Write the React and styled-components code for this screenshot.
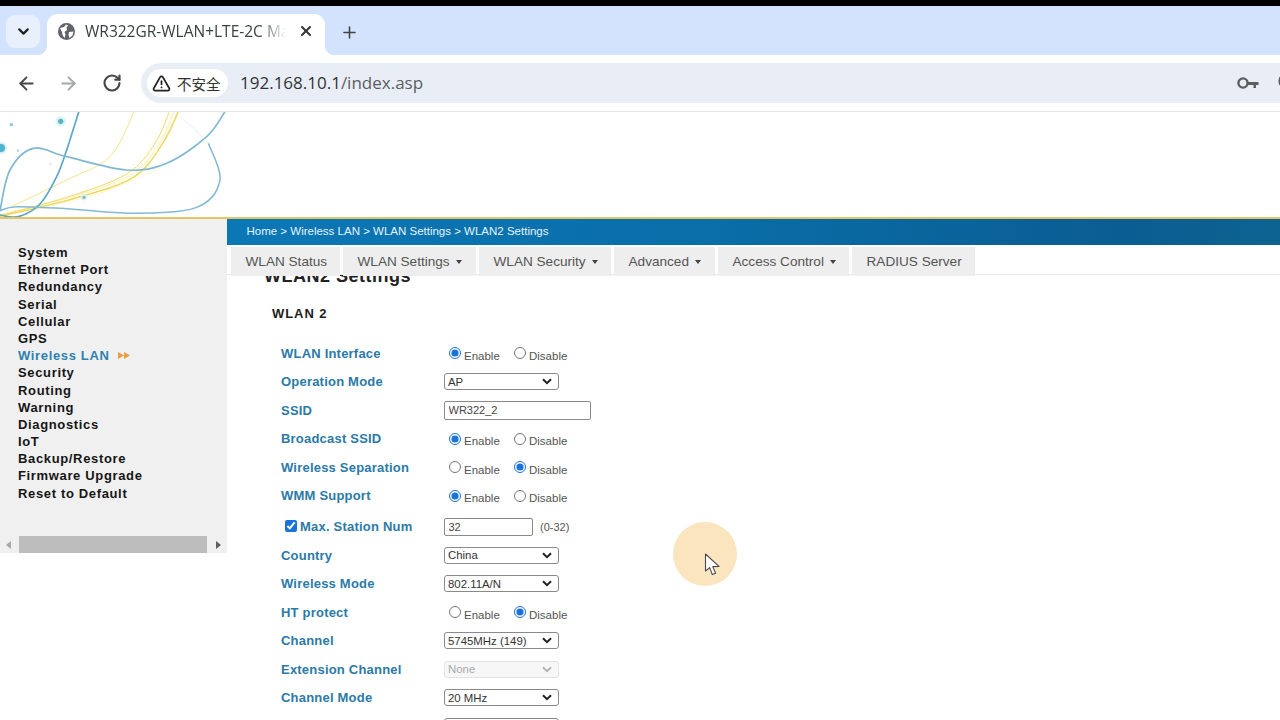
import React from "react";
import styled, { createGlobalStyle } from "styled-components";
import { ArrowLeft, ArrowRight, RotateCw, ChevronDown, X, Plus, TriangleAlert } from "lucide-react";

const Global = createGlobalStyle`
  html, body { margin: 0; padding: 0; background: #fff; }
  #root { width: 1280px; height: 720px; overflow: hidden; }
`;

const Page = styled.div`
  position: relative;
  width: 1280px;
  height: 720px;
  overflow: hidden;
  display: flex;
  flex-direction: column;
  font-family: "Liberation Sans", Arial, sans-serif;
  background: #fff;
`;
const BlackBar = styled.div`height: 6px; background: #000; flex: none;`;
const TabStrip = styled.div`
  height: 49px; flex: none; background: #d3e3fd;
  display: flex; align-items: flex-end; padding-left: 6px;
`;
const TabGroup = styled.div`
  width: 34px; height: 33px; margin-bottom: 7px; border-radius: 9px; background: #e8f0fd;
  display: flex; align-items: center; justify-content: center; color: #1f1f1f;
`;
const BrowserTab = styled.div`
  position: relative; width: 278px; height: 41px; margin-left: 7px;
  background: #fff; border-radius: 11px 11px 0 0;
  display: flex; align-items: center; padding: 0 11px 7px; box-sizing: border-box; gap: 10px;
  &::before, &::after {
    content: ""; position: absolute; bottom: 0; width: 10px; height: 10px;
  }
  &::before { left: -10px; background: radial-gradient(circle at 0 0, #d3e3fd 10px, #fff 10.5px); }
  &::after { right: -10px; background: radial-gradient(circle at 100% 0, #d3e3fd 10px, #fff 10.5px); }
`;
const TabTitle = styled.div`
  width: 203px; overflow: hidden; white-space: nowrap; color: #3c4043;
  font: 15.5px "Open Sans", sans-serif;
  -webkit-mask-image: linear-gradient(90deg, #000 86%, transparent 99%);
  mask-image: linear-gradient(90deg, #000 86%, transparent 99%);
`;
const NewTab = styled.div`
  margin: 0 0 8px 9px; height: 30px; width: 30px; display: flex; align-items: center; justify-content: center; color: #444;
`;
const Toolbar = styled.div`
  height: 57px; flex: none; background: #fff; display: flex; align-items: center;
  padding-left: 15px; box-sizing: border-box; border-bottom: 1px solid #e6e6e6;
`;
const NavButton = styled.div`
  width: 22px; height: 22px; margin-right: 20px; display: flex; align-items: center; justify-content: center;
  color: ${p => (p.$muted ? "#a6a8aa" : "#474747")};
  &:nth-child(3) { margin-left: 2px; margin-right: 18px; }
`;
const Omnibox = styled.div`
  flex: 1; height: 40px; background: #e9eef6; border-radius: 20px 0 0 20px;
  display: flex; align-items: center; padding-left: 6px; overflow: hidden;
`;
const SecurityChip = styled.div`
  height: 28px; width: 81px; background: #fff; border-radius: 14px; box-sizing: border-box;
  display: flex; align-items: center; padding-left: 5px; gap: 6px; color: #333;
  font: 14.5px "Noto Sans CJK SC", sans-serif; flex: none;
`;
const Url = styled.div`
  margin: 0 0 2px 12px; font: 17px "Open Sans", sans-serif; color: #303236; flex: 1; white-space: nowrap;
  span { color: #5b5e62; }
`;
const KeyIcon = styled.svg`flex: none; margin-right: 17px;`;
const ProfileEdge = styled.svg`flex: none; margin-right: -18px;`;

const Banner = styled.div`
  height: 105px; flex: none; background: #fff; border-bottom: 2px solid #e3c566;
`;

const Body = styled.div`flex: 1; display: flex; min-height: 0;`;
const Sidebar = styled.aside`
  width: 227px; flex: none; height: 334px; background: #f0f0f0; display: flex; flex-direction: column;
`;
const MenuList = styled.ul`
  list-style: none; margin: 0; padding: 25px 0 0 18px; flex: 1;
`;
const MenuItem = styled.li`
  height: 17.2px; line-height: 17.2px; font-size: 13px; font-weight: bold; letter-spacing: 0.65px;
  color: ${p => (p.$active ? "#2f81ad" : "#161616")};
  display: flex; align-items: center; gap: 8px;
`;
const HScroll = styled.div`
  height: 17px; flex: none; display: flex; align-items: center; justify-content: space-between; padding: 0 6px; position: relative;
`;
const Thumb = styled.div`
  position: absolute; left: 19px; width: 188px; top: 0; bottom: 0; background: #bdbdbd;
`;
const Arrow = styled.div`
  width: 0; height: 0; border-top: 4px solid transparent; border-bottom: 4px solid transparent;
  ${p => (p.$left ? "border-right: 5px solid #a8a8a8;" : "border-left: 5px solid #5f5f5f;")}
`;

const Main = styled.main`flex: 1; min-width: 0; display: flex; flex-direction: column; overflow: hidden;`;
const Breadcrumb = styled.div`
  height: 26px; flex: none; box-sizing: border-box; padding: 0 0 2px 19.5px;
  display: flex; align-items: center; color: #e6f2f9; font-size: 11.5px;
  background: linear-gradient(90deg, #0b78b6 0%, #0a6ea8 45%, #0a5d92 85%, #0c6390 100%);
`;
const TabBar = styled.nav`
  height: 30px; flex: none; display: flex; padding: 2px 0 0 4px; gap: 3px; box-sizing: border-box;
  position: relative; z-index: 1; background: #fff;
  &::after { content: ""; position: absolute; left: 0; right: 0; bottom: 0; height: 1px; background: #e6e6e6; }
`;
const MenuTab = styled.div`
  height: 29px; padding-left: 14.5px; display: flex; align-items: center; gap: 5px; background: #eeeeee;
  font-size: 13.6px; color: #555; position: relative; z-index: 1; flex: none; box-sizing: border-box;
  white-space: nowrap; width: ${p => p.$w}px;
`;
const Caret = styled.i`
  display: inline-block; width: 0; height: 0; margin-left: 1px;
  border-left: 3.5px solid transparent; border-right: 3.5px solid transparent; border-top: 4px solid #444;
`;
const Content = styled.div`flex: 1; min-height: 0; overflow: hidden;`;
const Heading = styled.h2`
  margin: -9px 0 0 37px; font-size: 18px; line-height: 20px; font-weight: bold; letter-spacing: 0.5px; color: #222;
`;
const SubHeading = styled.h3`
  margin: 20px 0 0 45px; font-size: 13px; line-height: 16px; font-weight: bold; letter-spacing: 0.95px; color: #1c1c1c;
`;
const Form = styled.div`margin: 17px 0 0 54px;`;
const Row = styled.div`
  display: flex; align-items: center; height: 28.5px; margin-top: ${p => (p.$shift ? "2.25px" : "0")};
`;
const Label = styled.label`
  width: 163px; flex: none; font-size: 13px; font-weight: bold; letter-spacing: 0.21px; color: #2b7aa8;
  display: flex; align-items: center; padding-left: ${p => (p.$check ? "4px" : "0")}; box-sizing: border-box;
`;
const Check = styled.input`
  width: 12px; height: 12px; margin: 0 3px 2px 0; accent-color: #1a73d9;
`;
const RadioGroup = styled.div`display: flex; padding-left: 5px; margin-top: 3px;`;
const RadioOption = styled.label`
  width: 65px; display: flex; align-items: center; font-size: 11.5px; color: #555;
`;
const Radio = styled.input`
  width: 12px; height: 12px; margin: 0 3px 3px 0; accent-color: #1a73d9;
  & + span { position: relative; top: 1px; }
`;
const chevron = c =>
  `url("data:image/svg+xml,%3Csvg xmlns='http://www.w3.org/2000/svg' width='10' height='7'%3E%3Cpath d='M1 1.2 L5 5.2 L9 1.2' fill='none' stroke='${c}' stroke-width='2'/%3E%3C/svg%3E")`;
const Select = styled.select`
  appearance: none; width: 115px; height: 17px; padding: 0 0 0 3px; font: 11.4px "Liberation Sans", sans-serif; color: #333;
  border: 1px solid #8a8a8a; border-radius: 3px; box-sizing: border-box;
  background: #fff ${chevron("%23222")} no-repeat right 6px center;
  &:disabled { color: #aaa; border-color: #e4e4e4; background: #f7f7f7 ${chevron("%23b5b5b5")} no-repeat right 6px center; opacity: 1; }
`;
const TextInput = styled.input`
  width: ${p => p.$w}px; height: ${p => p.$h}px; padding: 0 3.5px; font: 11px "Liberation Sans", sans-serif; color: #444;
  border: 1px solid #8a8a8a; border-radius: 2px; box-sizing: border-box;
`;
const Hint = styled.span`margin-left: 7px; font-size: 11px; color: #555;`;

const CursorHalo = styled.div`
  position: absolute; left: 673px; top: 522px; width: 64px; height: 64px; border-radius: 50%; background: #fbe5bf;
`;
const Cursor = styled.svg`position: absolute; left: 704px; top: 553px;`;

const z = pts => {
  let d = `M${pts[0][0]} ${pts[0][1]}`;
  for (let i = 0; i < pts.length - 1; i++) {
    const p0 = pts[i - 1] || pts[i], p1 = pts[i], p2 = pts[i + 1], p3 = pts[i + 2] || p2;
    d += ` C${p1[0] + (p2[0] - p0[0]) / 6} ${p1[1] + (p2[1] - p0[1]) / 6} ${p2[0] - (p3[0] - p1[0]) / 6} ${p2[1] - (p3[1] - p1[1]) / 6} ${p2[0]} ${p2[1]}`;
  }
  return d;
};

const BannerArt = () => (
  <svg width="227" height="105" viewBox="0 36 681 315" fill="none">
    <path d={z([[-5, 345], [210, 292], [392, 226], [478, 130], [524, 30]])} stroke="#fbf6d2" strokeWidth="6" />
    <path d={z([[-5, 348], [200, 292], [380, 222], [465, 130], [510, 30]])} stroke="#eedb66" strokeWidth="3" />
    <path d={z([[-5, 350], [220, 296], [400, 232], [488, 130], [537, 30]])} stroke="#efd95c" strokeWidth="4.5" />
    <path d={z([[30, 322], [200, 240], [330, 170], [405, 30]])} stroke="#f2e68e" strokeWidth="3" />
    <path d={z([[130, 322], [300, 280], [480, 205]])} stroke="#f7f0c0" strokeWidth="2" />
    <path d={z([[0, 345], [55, 350], [120, 312], [170, 230], [200, 150], [238, 30]])} stroke="#5aa6c8" strokeWidth="5" />
    <path d={z([[0, 332], [30, 210], [100, 145], [200, 170], [380, 210], [500, 190], [620, 110], [678, 30]])} stroke="#7fb8d3" strokeWidth="5" />
    <path d={z([[0, 332], [50, 320], [200, 326], [400, 340], [590, 322], [660, 240], [625, 130]])} stroke="#84bad3" strokeWidth="4.5" />
    <path d={z([[625, 130], [585, 90], [540, 50]])} stroke="#d5e6ee" strokeWidth="2" />
    <circle cx="182" cy="64" r="16" fill="#dff2f5" />
    <circle cx="182" cy="64" r="8" fill="#5ab5c4" />
    <circle cx="34" cy="74" r="5" fill="#8ec4cf" />
    <circle cx="3" cy="144" r="18" fill="#d8f0f5" />
    <circle cx="3" cy="144" r="12" fill="#4fb4cf" />
    <circle cx="54" cy="152" r="4" fill="#b5dbe3" />
    <circle cx="152" cy="192" r="3" fill="#c8e3e9" />
    <circle cx="252" cy="292" r="10" fill="#dff0ee" />
    <circle cx="252" cy="292" r="5" fill="#7dc0c0" />
  </svg>
);

const GlobeIcon = () => (
  <svg width="17" height="17" viewBox="0 0 17 17">
    <circle cx="8.5" cy="8.5" r="8.5" fill="#5f6368" />
    <path d="M2 5 L6 4 L8 1.5 L10 2.5 L8.5 5 L9 7 L6.5 9 L7.5 11.5 L6.5 15 L4.5 12 L4 9 Z M11 9 L15.5 8.5 L14.5 12.5 L11.5 15 L10.5 12 Z" fill="#fff" />
  </svg>
);

const Menu = ["System", "Ethernet Port", "Redundancy", "Serial", "Cellular", "GPS", "Wireless LAN", "Security", "Routing", "Warning", "Diagnostics", "IoT", "Backup/Restore", "Firmware Upgrade", "Reset to Default"];

const RadioRow = ({ name, label, on }) => (
  <Row>
    <Label>{label}</Label>
    <RadioGroup>
      <RadioOption><Radio type="radio" name={name} defaultChecked={on === 0} /><span>Enable</span></RadioOption>
      <RadioOption><Radio type="radio" name={name} defaultChecked={on === 1} /><span>Disable</span></RadioOption>
    </RadioGroup>
  </Row>
);
const SelectRow = ({ label, value, disabled }) => (
  <Row>
    <Label>{label}</Label>
    <Select defaultValue={value} disabled={disabled}><option>{value}</option></Select>
  </Row>
);

export default function App() {
  return (
    <Page>
      <Global />
      <BlackBar />
      <TabStrip>
        <TabGroup><ChevronDown size={17} strokeWidth={3} /></TabGroup>
        <BrowserTab>
          <GlobeIcon />
          <TabTitle>WR322GR-WLAN+LTE-2C Manager</TabTitle>
          <X size={16} strokeWidth={3} color="#333" />
        </BrowserTab>
        <NewTab><Plus size={19} strokeWidth={2} /></NewTab>
      </TabStrip>
      <Toolbar>
        <NavButton><ArrowLeft size={21} strokeWidth={2.2} /></NavButton>
        <NavButton $muted><ArrowRight size={21} strokeWidth={2.2} /></NavButton>
        <NavButton><RotateCw size={20} strokeWidth={2.6} /></NavButton>
        <Omnibox>
          <SecurityChip><TriangleAlert size={19} strokeWidth={2.2} color="#222" />不安全</SecurityChip>
          <Url>192.168.10.1<span>/index.asp</span></Url>
          <KeyIcon width="22" height="14" viewBox="0 0 22 14" fill="none">
            <circle cx="6" cy="7" r="4.6" stroke="#5a5d61" strokeWidth="2.4" />
            <path d="M10.5 6 H21.5 V9 H19 V12 H16.5 V9 H10.5 Z" fill="#5a5d61" />
          </KeyIcon>
          <ProfileEdge width="22" height="20" viewBox="0 0 22 20" fill="none">
            <circle cx="10" cy="8" r="6.5" stroke="#5a5d61" strokeWidth="2.2" />
          </ProfileEdge>
        </Omnibox>
      </Toolbar>
      <Banner><BannerArt /></Banner>
      <Body>
        <Sidebar>
          <MenuList>
            {Menu.map(m => (
              <MenuItem key={m} $active={m === "Wireless LAN"}>
                {m}
                {m === "Wireless LAN" && (
                  <svg width="12" height="7" viewBox="0 0 12 7"><path d="M0 0 L6 3.5 L0 7 Z M6 0 L12 3.5 L6 7 Z" fill="#ef9a3c" /></svg>
                )}
              </MenuItem>
            ))}
          </MenuList>
          <HScroll>
            <Arrow $left />
            <Thumb />
            <Arrow />
          </HScroll>
        </Sidebar>
        <Main>
          <Breadcrumb>Home &gt; Wireless LAN &gt; WLAN Settings &gt; WLAN2 Settings</Breadcrumb>
          <TabBar>
            <MenuTab $w={109}>WLAN Status</MenuTab>
            <MenuTab $w={133}>WLAN Settings <Caret /></MenuTab>
            <MenuTab $w={132}>WLAN Security <Caret /></MenuTab>
            <MenuTab $w={101}>Advanced <Caret /></MenuTab>
            <MenuTab $w={131}>Access Control <Caret /></MenuTab>
            <MenuTab $w={123}>RADIUS Server</MenuTab>
          </TabBar>
          <Content>
            <Heading>WLAN2 Settings</Heading>
            <SubHeading>WLAN 2</SubHeading>
            <Form>
              <RadioRow name="iface" label="WLAN Interface" on={0} />
              <SelectRow label="Operation Mode" value="AP" />
              <Row>
                <Label>SSID</Label>
                <TextInput $w={147} $h={19} defaultValue="WR322_2" />
              </Row>
              <RadioRow name="bcast" label="Broadcast SSID" on={0} />
              <RadioRow name="sep" label="Wireless Separation" on={1} />
              <RadioRow name="wmm" label="WMM Support" on={0} />
              <Row $shift>
                <Label $check><Check type="checkbox" defaultChecked />Max. Station Num</Label>
                <TextInput $w={89} $h={18} defaultValue="32" />
                <Hint>(0-32)</Hint>
              </Row>
              <SelectRow label="Country" value="China" />
              <SelectRow label="Wireless Mode" value="802.11A/N" />
              <RadioRow name="ht" label="HT protect" on={1} />
              <SelectRow label="Channel" value="5745MHz (149)" />
              <SelectRow label="Extension Channel" value="None" disabled />
              <SelectRow label="Channel Mode" value="20 MHz" />
              <SelectRow label="" value="" />
            </Form>
          </Content>
        </Main>
      </Body>
      <CursorHalo />
      <Cursor width="18" height="24" viewBox="0 0 18 24">
        <path d="M1.5 1 L1.5 18 L5.7 14.6 L8.3 21.6 L11.6 20.2 L8.8 13.6 L15 13.4 Z" fill="#fff" stroke="#4a4a4a" strokeWidth="1.1" strokeLinejoin="round" />
      </Cursor>
    </Page>
  );
}
